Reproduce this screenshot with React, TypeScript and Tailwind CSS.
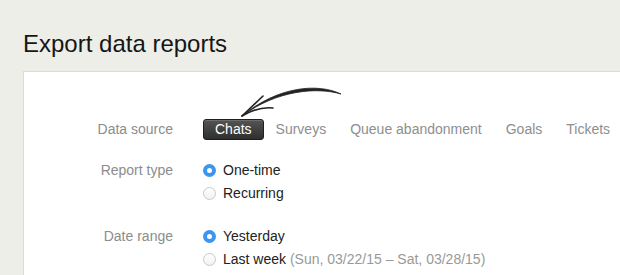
import React from "react";

const tabs = ["Chats", "Surveys", "Queue abandonment", "Goals", "Tickets"];

function Radio({ checked }: { checked?: boolean }) {
  return checked ? (
    <span className="flex h-[13px] w-[13px] items-center justify-center rounded-full bg-[#3a96f2]">
      <span className="h-[5px] w-[5px] rounded-full bg-white" />
    </span>
  ) : (
    <span className="h-[13px] w-[13px] rounded-full border border-[#c9c9c9] bg-gradient-to-b from-white to-[#f1f1f1]" />
  );
}

function Option({ checked, children }: { checked?: boolean; children: React.ReactNode }) {
  return (
    <div className="flex h-[23px] items-center gap-[7px]">
      <Radio checked={checked} />
      <span className="text-[#222]">{children}</span>
    </div>
  );
}

export default function App() {
  const active = "Chats";

  return (
    <div className="h-screen overflow-hidden bg-[#eeeee9] pl-[23px] pt-[30px] font-['Liberation_Sans',Arial,sans-serif]">
      <h1 className="text-[24px] leading-[28px] text-[#161616]">Export data reports</h1>

      <div className="relative mt-[13px] h-[300px] w-[640px] border border-[#dcdcd7] bg-white pt-[47px] text-[14px]">
        {/* hand drawn arrow pointing at the active tab */}
        <svg className="absolute left-[196px] top-[8px]" width="130" height="45" viewBox="0 0 130 45">
          <path d="M121 14 C 98 3, 58 6, 22 36 C 57 10, 97 7, 121 14 Z" fill="#222" stroke="#222" strokeWidth="0.8" />
          <path d="M22 36 L 43 16" stroke="#222" strokeWidth="1.6" strokeLinecap="round" fill="none" />
          <path d="M22 36 C 32 30, 44 27, 53 28" stroke="#222" strokeWidth="1.6" strokeLinecap="round" fill="none" />
        </svg>

        <div className="flex items-center">
          <div className="w-[149px] text-right text-[#8c8c8c]">Data source</div>
          <div className="ml-[30px] flex">
            {tabs.map((t) =>
              t === active ? (
                <span
                  key={t}
                  className="h-[21px] rounded-[3px] border border-[#1e1e1e] bg-gradient-to-b from-[#555] to-[#2f2f2f] px-[11px] leading-[19px] text-white shadow-[inset_0_1px_0_rgba(255,255,255,0.15)]"
                >
                  {t}
                </span>
              ) : (
                <span key={t} className="h-[21px] px-3 leading-[21px] text-[#8e8e8e]">
                  {t}
                </span>
              )
            )}
          </div>
        </div>

        <div className="mt-[19px] flex items-start">
          <div className="w-[149px] text-right leading-[23px] text-[#8c8c8c]">Report type</div>
          <div className="ml-[30px]">
            <Option checked>One-time</Option>
            <Option>Recurring</Option>
          </div>
        </div>

        <div className="mt-[20px] flex items-start">
          <div className="w-[149px] text-right leading-[23px] text-[#8c8c8c]">Date range</div>
          <div className="ml-[30px]">
            <Option checked>Yesterday</Option>
            <Option>
              Last week <span className="text-[#999]">(Sun, 03/22/15 – Sat, 03/28/15)</span>
            </Option>
          </div>
        </div>
      </div>
    </div>
  );
}
